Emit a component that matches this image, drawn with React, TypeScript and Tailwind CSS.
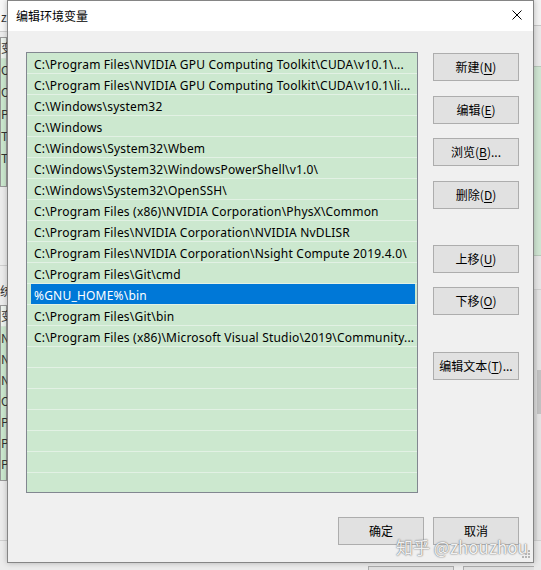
import { Fragment } from "react";

const paths = [
  "C:\\Program Files\\NVIDIA GPU Computing Toolkit\\CUDA\\v10.1\\...",
  "C:\\Program Files\\NVIDIA GPU Computing Toolkit\\CUDA\\v10.1\\li...",
  "C:\\Windows\\system32",
  "C:\\Windows",
  "C:\\Windows\\System32\\Wbem",
  "C:\\Windows\\System32\\WindowsPowerShell\\v1.0\\",
  "C:\\Windows\\System32\\OpenSSH\\",
  "C:\\Program Files (x86)\\NVIDIA Corporation\\PhysX\\Common",
  "C:\\Program Files\\NVIDIA Corporation\\NVIDIA NvDLISR",
  "C:\\Program Files\\NVIDIA Corporation\\Nsight Compute 2019.4.0\\",
  "C:\\Program Files\\Git\\cmd",
  "%GNU_HOME%\\bin",
  "C:\\Program Files\\Git\\bin",
  "C:\\Program Files (x86)\\Microsoft Visual Studio\\2019\\Community...",
];

const rows = Array.from({ length: 21 }, (_, i) => paths[i] ?? "");

const SELECTED = 11;

const cjk = "font-['Microsoft_YaHei_UI','Noto_Sans_CJK_SC',sans-serif]";

function Btn({ label, keyChar, dots, className }: { label: string; keyChar?: string; dots?: boolean; className?: string }) {
  return (
    <button
      className={
        "h-[28px] w-[86px] shrink-0 bg-[#e1e1e1] border border-[#adadad] text-[12px] text-black flex items-center justify-center " +
        cjk +
        " " +
        (className ?? "")
      }
    >
      {label}
      {keyChar && (
        <Fragment>
          (<span className="underline underline-offset-2">{keyChar}</span>)
        </Fragment>
      )}
      {dots && "..."}
    </button>
  );
}

// the window behind the dialog, only its left 7px show
function LeftStrip() {
  return (
    <div className={"w-[7px] shrink-0 overflow-hidden flex flex-col text-[12px] text-[#333] whitespace-nowrap " + cjk}>
      <div className="h-[32px] shrink-0 bg-[#f7f7f7] border-b border-[#cfcfcf] pl-[1px] pt-[8px]">z</div>
      <div className="h-[5px] shrink-0" />
      <div className="h-[150px] shrink-0 bg-[#cce8cf] border border-[#9a9a9a] flex flex-col">
        <div className="h-[21px] shrink-0 bg-[#eef4ef] border-b border-[#d6e6d8] leading-[20px]">变</div>
        {["O", "O", "Pa", "TE", "TM"].map((t, i) => (
          <div key={i} className="h-[22px] shrink-0 leading-[22px]">
            {t}
          </div>
        ))}
      </div>
      <div className="h-[78px] shrink-0" />
      <div className="h-[40px] shrink-0 border-t border-[#cfcfcf] pt-[16px]">统</div>
      <div className="h-[176px] shrink-0 bg-[#cce8cf] border border-[#9a9a9a] flex flex-col">
        <div className="h-[21px] shrink-0 bg-[#eef4ef] border-b border-[#d6e6d8] leading-[20px]">变</div>
        {["N", "N", "N", "O", "Pa", "PA", "PR"].map((t, i) => (
          <div key={i} className="h-[21px] shrink-0 leading-[21px]">
            {t}
          </div>
        ))}
      </div>
      <div className="h-[60px] shrink-0 border-b border-[#cfcfcf]" />
    </div>
  );
}

function RightStrip() {
  return (
    <div className="w-[7px] shrink-0 overflow-hidden flex flex-col">
      <div className="h-[26px] shrink-0 bg-[#f3f3f3] border-b border-[#c8c8c8]" />
      <div className="h-[40px] shrink-0 bg-[#e9e9e9]" />
      <div className="h-[190px] shrink-0 bg-[#cfe5d2] border-y border-[#b9c9bb]" />
      <div className="h-[34px] shrink-0 bg-[#e6e6e6] border-b border-[#cfcfcf]" />
      <div className="flex-1 bg-[#e3e3e3] flex">
        <div className="w-[3px] bg-[#dadada]" />
        <div className="flex-1 flex flex-col">
          <div className="h-[80px]" />
          <div className="h-[44px] bg-[#c2c2c2]" />
        </div>
      </div>
      <div className="h-[30px] shrink-0 bg-[#e9e9e9] border-t border-[#cfcfcf]" />
    </div>
  );
}

function Dialog() {
  return (
    <div className="relative h-[563px] shrink-0 border border-[#858585] bg-[#f0f0f0] flex flex-col shadow-[0_0_6px_rgba(0,0,0,0.25)]">
      <div className="h-[30px] shrink-0 bg-white flex items-center justify-between pl-[8px] pr-[11px]">
        <span className={"text-[12px] text-black " + cjk}>编辑环境变量</span>
        <svg width="10" height="10" viewBox="0 0 10 10" className="mt-[-2px]">
          <path d="M0.5 0.5 L9.5 9.5 M9.5 0.5 L0.5 9.5" stroke="#000" strokeWidth="1" fill="none" />
        </svg>
      </div>

      <div className="flex-1 flex flex-col pl-[18px] pt-[21px]">
        <div className="flex">
          <div className="w-[392px] h-[441px] shrink-0 border border-[#828790] bg-[#cce8cf] overflow-hidden flex flex-col font-['Segoe_UI','Noto_Sans',sans-serif] text-[12px] tracking-[0.2px] text-black">
            {rows.map((p, i) => (
              <div key={i} className="h-[21px] shrink-0 border-b border-[#e2f1e4] pl-[4px] pr-[2px] flex">
                <div
                  className={
                    i === SELECTED
                      ? "flex-1 bg-[#0078d7] text-white pl-[3px] pt-[2px] leading-[19px] whitespace-nowrap overflow-hidden"
                      : "flex-1 pl-[3px] pt-[2px] leading-[19px] whitespace-nowrap overflow-hidden"
                  }
                >
                  {p}
                </div>
              </div>
            ))}
          </div>

          <div className="ml-[15px] mt-[1px] flex flex-col">
            <Btn label="新建" keyChar="N" />
            <Btn label="编辑" keyChar="E" className="mt-[15px]" />
            <Btn label="浏览" keyChar="B" dots className="mt-[14px]" />
            <Btn label="删除" keyChar="D" className="mt-[15px]" />
            <Btn label="上移" keyChar="U" className="mt-[36px]" />
            <Btn label="下移" keyChar="O" className="mt-[14px]" />
            <Btn label="编辑文本" keyChar="T" dots className="mt-[37px]" />
          </div>
        </div>

        <div className="mt-[24px] flex justify-end gap-[9px] pr-[14px]">
          <Btn label="确定" />
          <Btn label="取消" />
        </div>
      </div>

      <span
        className={
          "absolute left-[388px] top-[533px] text-[17px] text-white/90 whitespace-nowrap [text-shadow:0_0_1px_#666,0_0_2px_#888] " +
          cjk
        }
      >
        知乎 @zhouzhou
      </span>
      <svg width="9" height="9" viewBox="0 0 9 9" className="absolute right-[2px] bottom-[3px]">
        <g fill="#b5b5b5">
          <rect x="6" y="0" width="2" height="2" />
          <rect x="3" y="3" width="2" height="2" />
          <rect x="6" y="3" width="2" height="2" />
          <rect x="0" y="6" width="2" height="2" />
          <rect x="3" y="6" width="2" height="2" />
          <rect x="6" y="6" width="2" height="2" />
        </g>
      </svg>
    </div>
  );
}

function BottomStrip() {
  return (
    <div className="h-[7px] shrink-0 flex items-start pt-[3px] overflow-hidden bg-[#ececec]">
      <div className="w-[361px] shrink-0" />
      <div className="w-[86px] h-[10px] shrink-0 bg-[#e1e1e1] border border-[#adadad]" />
      <div className="w-[9px] shrink-0" />
      <div className="w-[86px] h-[10px] shrink-0 bg-[#e1e1e1] border border-[#adadad]" />
    </div>
  );
}

export default function App() {
  return (
    <div className="w-[541px] h-[570px] flex overflow-hidden bg-[#ececec]">
      <LeftStrip />
      <div className="w-[527px] shrink-0 flex flex-col">
        <Dialog />
        <BottomStrip />
      </div>
      <RightStrip />
    </div>
  );
}
